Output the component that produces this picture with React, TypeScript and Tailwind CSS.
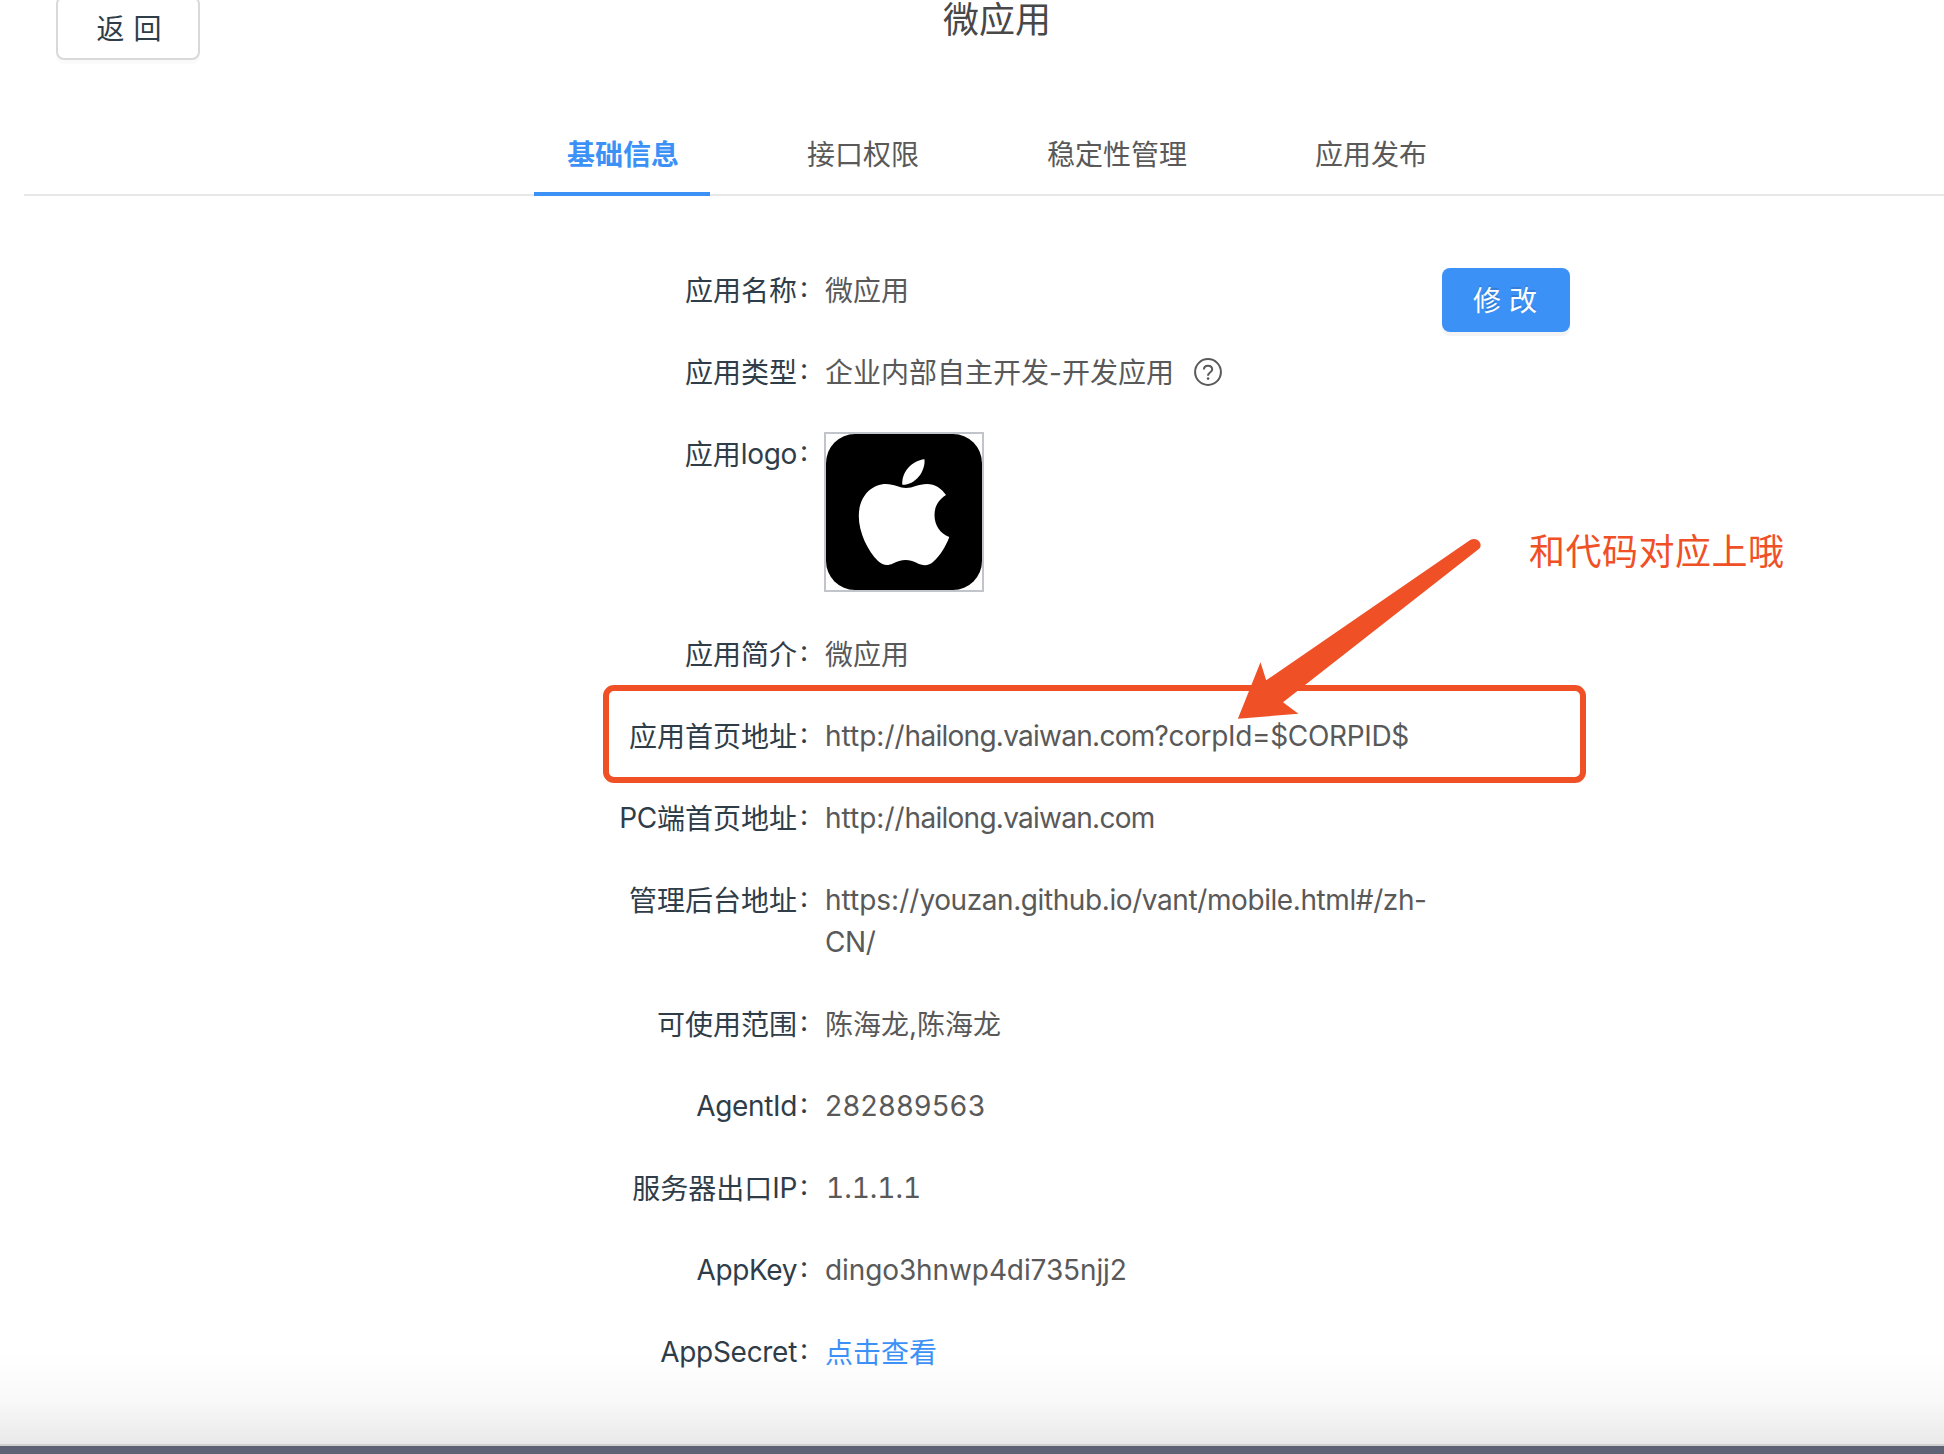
import type { ReactNode } from 'react';

const tabs = [
  { label: '基础信息', active: true },
  { label: '接口权限' },
  { label: '稳定性管理' },
  { label: '应用发布' },
];

function AppleLogo() {
  return (
    <div className="-mt-0.5 -ml-px h-40 w-40 border-2 border-[#c1c5c9] bg-white">
      <svg viewBox="0 0 156 156" className="block h-full w-full">
        <rect width="156" height="156" rx="29" fill="#000" />
        <path
          d="M98.5 25.2C99.5 38 89 51 76.3 50.8C75.2 38 86 26.500 98.500 25.200Z"
          fill="#fff"
        />
        <path
          d="M80 54C87 54 92 50 101 50C109 50 115.500 54.500 120 61C112 66 108.500 73 108.500 81C108.500 91 114 99.500 123.300 103C120 112 114 122 107.500 127.500C103.500 131.500 98 132 93 130C88 127.500 84 126 79.500 126C75 126 71.500 127.500 67 129.500C61.500 132 57 131.500 52 127C42 117 32.800 99 32.800 82C32.800 62 46 50 60 50C68 50 74 54 80 54Z"
          fill="#fff"
        />
      </svg>
    </div>
  );
}

function HelpIcon() {
  return (
    <svg viewBox="0 0 28 28" className="mb-0.5 ml-5 h-7 w-7" fill="none" stroke="#595959" strokeWidth="2">
      <circle cx="14" cy="14" r="12.900" />
      <path d="M9.900 11.600C9.900 9 11.600 7.700 14 7.700C16.400 7.700 18.200 9.200 18.200 11.400C18.200 14.300 14.100 14.300 14.100 17.700" />
      <circle cx="14.100" cy="20.600" r="1.300" fill="#595959" stroke="none" />
    </svg>
  );
}

function Latin({ className = '', children }: { className?: string; children: ReactNode }) {
  return <span className={`inline-block -translate-y-px ${className}`}>{children}</span>;
}

function Row({ label, className = '', children }: { label: ReactNode; className?: string; children: ReactNode }) {
  return (
    <div className={`flex min-h-[42px] items-start ${className}`}>
      <div className="w-[797px] shrink-0 text-right whitespace-nowrap text-[#2f3d49]">{label}</div>
      <div className="w-7 shrink-0 -translate-y-1 pl-[3px] text-[#2f3d49]">:</div>
      <div className="w-[607px] shrink-0">{children}</div>
    </div>
  );
}

export default function App() {
  return (
    <div className="relative flex h-[1454px] w-[1944px] flex-col overflow-hidden bg-white font-['Inter','Noto_Sans_CJK_SC',sans-serif] text-[28px] leading-[42px] text-[#595959]">
      <header className="grid h-28 shrink-0 grid-cols-[1fr_auto_1fr] items-start pr-14 pl-14">
        <button className="-mt-1 flex h-16 w-36 items-center justify-center gap-[9px] rounded-lg border-2 border-[#d9d9d9] pt-0.5 pl-0.5 text-[#2f3d49] shadow-[0_4px_0_#fafafa]">
          <span>返</span>
          <span>回</span>
        </button>
        <h1 className="w-[108px] translate-x-[25px] text-[36px] leading-[40px] text-[#484848]">微应用</h1>
      </header>

      <nav className="ml-6 flex h-[84px] shrink-0 gap-16 border-b-2 border-[#e8e8e8] pl-[510px]">
        {tabs.map((tab) => (
          <div
            key={tab.label}
            className={
              tab.active
                ? 'h-[84px] border-b-4 border-[#3c91f7] pt-[22px] pr-[31px] pl-[33px] font-semibold text-[#3c91f7]'
                : 'h-[84px] pt-[22px] pr-[31px] pl-[33px]'
            }
          >
            {tab.label}
          </div>
        ))}
      </nav>

      <main className="relative flex pt-[74px]">
        <div className="flex flex-col gap-10">
          <Row label="应用名称">微应用</Row>
          <Row label="应用类型">
            <div className="flex items-center">
              企业内部自主开发-开发应用
              <HelpIcon />
            </div>
          </Row>
          <Row label={<>应用<Latin className="tracking-[-0.3px]">logo</Latin></>} className="h-40">
            <AppleLogo />
          </Row>
          <Row label="应用简介">微应用</Row>
          <Row label="应用首页地址">
            <Latin>
              http://<span className="tracking-[-0.73px]">hailong.vaiwan.com</span>
              <span className="tracking-[-0.34px]">?corpId=$CORPID$</span>
            </Latin>
          </Row>
          <Row label={<><Latin className="tracking-[-0.3px]">PC</Latin>端首页地址</>}>
            <Latin>
              http://<span className="tracking-[-0.73px]">hailong.vaiwan.com</span>
            </Latin>
          </Row>
          <Row label="管理后台地址">
            <Latin>
              https://
              <span className="tracking-[-0.41px]">
                youzan.github.io/vant/mobile.html#/zh-
                <br />
                CN/
              </span>
            </Latin>
          </Row>
          <Row label="可使用范围">陈海龙,陈海龙</Row>
          <Row label={<Latin className="tracking-[-0.35px]">AgentId</Latin>}>
            <Latin className="tracking-[0.6px]">282889563</Latin>
          </Row>
          <Row label={<>服务器出口<Latin className="tracking-[-0.3px]">IP</Latin></>}>
            <Latin className="pl-px tabular-nums [font-kerning:none]">1.1.1.1</Latin>
          </Row>
          <Row label={<Latin className="tracking-[-0.4px]">AppKey</Latin>}>
            <Latin className="tracking-[-0.1px]">dingo3hnwp4di735njj2</Latin>
          </Row>
          <Row label={<Latin className="tracking-[-0.3px]">AppSecret</Latin>}>
            <a className="text-[#3c91f7]">点击查看</a>
          </Row>
        </div>
        <button className="-mt-0.5 ml-[10px] flex h-16 w-32 items-center justify-center gap-2 rounded-lg bg-[#3c91f7] pt-0.5 pr-0.5 text-white shadow-[0_4px_0_#f4f4f4] [text-shadow:0_-2px_0_rgba(0,0,0,0.12)]">
          <span>修</span>
          <span>改</span>
        </button>
      </main>

      <div className="absolute top-[685px] left-[603px] h-[98px] w-[983px] rounded-[11px] border-6 border-[#f05026]" />
      <svg className="absolute top-[530px] left-[1230px] h-[200px] w-[260px]" viewBox="1230 530 260 200">
        <path
          d="M1237.900 718.700L1260.500 662.300L1266.200 680.300L1469.800 540.300C1473.500 537.800 1477.500 538.800 1479.600 542C1481.500 545 1480.500 547.500 1478.500 549.200L1283 702.300L1298.400 713.700Z"
          fill="#f05026"
        />
      </svg>
      <div className="absolute top-[531px] left-[1529px] text-[36px] leading-[42px] tracking-[0.5px] whitespace-nowrap text-[#f05026]">
        和代码对应上哦
      </div>

      <div className="absolute inset-x-0 bottom-0 flex h-[104px] flex-col">
        <div className="flex-1 bg-linear-to-b from-black/0 via-black/[0.022] to-black/[0.085]" />
        <div className="h-0.5 bg-[#d0d0d0]" />
        <div className="h-2 bg-[#5d6375]" />
      </div>
    </div>
  );
}
